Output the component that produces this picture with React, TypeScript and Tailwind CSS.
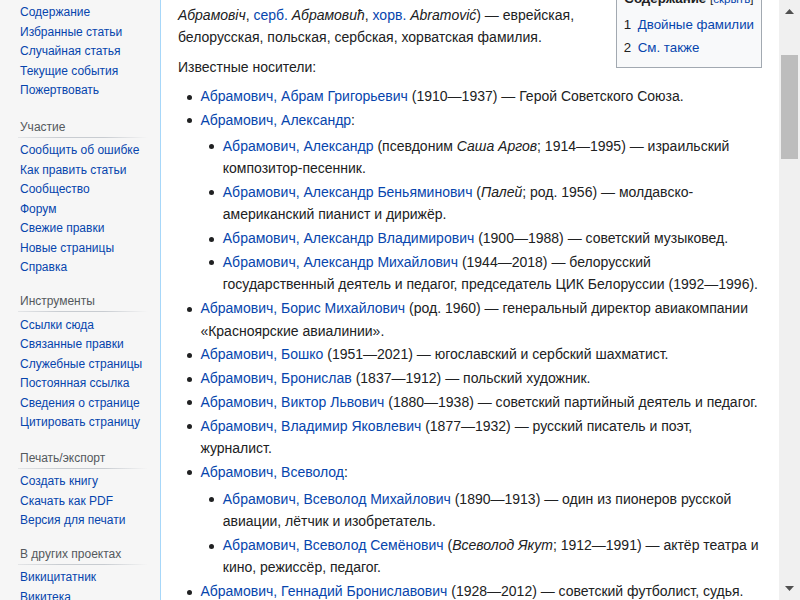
import React from "react";

const font = { fontFamily: '"Liberation Sans", Arial, sans-serif' };

function SideLinks({ links }: { links: string[] }) {
  return (
    <ul>
      {links.map((l) => (
        <li key={l} className="h-[19.5px] pl-[20px] text-[12px] leading-[19.5px] text-[#0645ad] whitespace-nowrap">
          <a>{l}</a>
        </li>
      ))}
    </ul>
  );
}

function Portal({ title, links, mt }: { title: string; links: string[]; mt: string }) {
  return (
    <div className={mt}>
      <div className="h-[19px] pl-[20px] text-[12px] leading-[19px] text-[#54595d]">{title}</div>
      <div className="ml-[18px] mr-[12px] h-px bg-[linear-gradient(to_right,rgba(200,204,209,0.4)_0%,#c8ccd1_33%,#c8ccd1_66%,rgba(200,204,209,0)_100%)]" />
      <div className="mt-[3.5px]">
        <SideLinks links={links} />
      </div>
    </div>
  );
}

function A({ children }: { children: React.ReactNode }) {
  return <a className="text-[#0645ad]">{children}</a>;
}

function Li({ children }: { children: React.ReactNode }) {
  return (
    <li className="relative mb-[1.4px] before:absolute before:left-[-13.5px] before:top-[9.5px] before:h-[5px] before:w-[5px] before:rounded-full before:bg-[#202122] before:content-['']">
      {children}
    </li>
  );
}

export default function App() {
  return (
    <div className="flex h-[600px] w-[800px] overflow-hidden bg-white" style={font}>
      <aside className="w-[161px] shrink-0 border-r border-[#a7d7f9] bg-[#f6f6f6] pt-[3px]">
        <SideLinks
          links={["Содержание", "Избранные статьи", "Случайная статья", "Текущие события", "Пожертвовать"]}
        />
        <Portal
          mt="mt-[17px]"
          title="Участие"
          links={[
            "Сообщить об ошибке",
            "Как править статьи",
            "Сообщество",
            "Форум",
            "Свежие правки",
            "Новые страницы",
            "Справка",
          ]}
        />
        <Portal
          mt="mt-[14.5px]"
          title="Инструменты"
          links={[
            "Ссылки сюда",
            "Связанные правки",
            "Служебные страницы",
            "Постоянная ссылка",
            "Сведения о странице",
            "Цитировать страницу",
          ]}
        />
        <Portal
          mt="mt-[16px]"
          title="Печать/экспорт"
          links={["Создать книгу", "Скачать как PDF", "Версия для печати"]}
        />
        <Portal mt="mt-[14px]" title="В других проектах" links={["Викицитатник", "Викитека"]} />
      </aside>

      <main className="min-w-0 flex-1 px-[17px] text-[14px] leading-[22.4px] text-[#202122]">
        <div className="mt-[-18.6px]">
          <div className="float-right ml-[14px] mb-[5px] mt-[-1px] border border-[#a2a9b1] bg-[#f8f9fa] px-[7px] pt-[7px] pb-[8px] text-[13.3px]">
            <div className="text-center whitespace-nowrap">
              <span className="font-bold">Содержание</span>{" "}
              <span className="text-[11.6px]">
                [<a className="text-[#0645ad]">скрыть</a>]
              </span>
            </div>
            <ul className="mt-[3px]">
              <li className="leading-[22.8px]">
                <span className="pr-[6.6px]">1</span>
                <A>Двойные фамилии</A>
              </li>
              <li className="leading-[22.8px]">
                <span className="pr-[6.6px]">2</span>
                <A>См. также</A>
              </li>
            </ul>
          </div>
          <p className="mb-[7px]">
            <b>Абрамо́вич</b> (<A>белор.</A>
            <br />
            <i>Абрамовіч</i>, <A>серб.</A> <i>Абрамовић</i>, <A>хорв.</A> <i>Abramović</i>) — еврейская,
            белорусская, польская, сербская, хорватская фамилия.
          </p>
          <p>Известные носители:</p>
          <ul className="mt-[7px] ml-[22.4px]">
            <Li>
              <A>Абрамович, Абрам Григорьевич</A> (1910—1937) — Герой Советского Союза.
            </Li>
            <Li>
              <A>Абрамович, Александр</A>:
              <ul className="mt-[3.5px] ml-[22.4px]">
                <Li>
                  <A>Абрамович, Александр</A> (псевдоним <i>Саша Аргов</i>; 1914—1995) — израильский
                  композитор-песенник.
                </Li>
                <Li>
                  <A>Абрамович, Александр Беньяминович</A> (<i>Палей</i>; род. 1956) — молдавско-американский
                  пианист и дирижёр.
                </Li>
                <Li>
                  <A>Абрамович, Александр Владимирович</A> (1900—1988) — советский музыковед.
                </Li>
                <Li>
                  <A>Абрамович, Александр Михайлович</A> (1944—2018) — белорусский государственный деятель
                  и педагог, председатель ЦИК Белоруссии (1992—1996).
                </Li>
              </ul>
            </Li>
            <Li>
              <A>Абрамович, Борис Михайлович</A> (род. 1960) — генеральный директор авиакомпании
              «Красноярские авиалинии».
            </Li>
            <Li>
              <A>Абрамович, Бошко</A> (1951—2021) — югославский и сербский шахматист.
            </Li>
            <Li>
              <A>Абрамович, Бронислав</A> (1837—1912) — польский художник.
            </Li>
            <Li>
              <A>Абрамович, Виктор Львович</A> (1880—1938) — советский партийный деятель и педагог.
            </Li>
            <Li>
              <A>Абрамович, Владимир Яковлевич</A> (1877—1932) — русский писатель и поэт, журналист.
            </Li>
            <Li>
              <A>Абрамович, Всеволод</A>:
              <ul className="mt-[4.5px] ml-[22.4px]">
                <Li>
                  <A>Абрамович, Всеволод Михайлович</A> (1890—1913) — один из пионеров русской авиации,
                  лётчик и изобретатель.
                </Li>
                <Li>
                  <A>Абрамович, Всеволод Семёнович</A> (<i>Всеволод Якут</i>; 1912—1991) — актёр театра и
                  кино, режиссёр, педагог.
                </Li>
              </ul>
            </Li>
            <Li>
              <A>Абрамович, Геннадий Брониславович</A> (1928—2012) — советский футболист, судья.
            </Li>
            <Li>
              <A>Абрамович, Григорий Семёнович</A> (1904—1972) — советский учёный.
            </Li>
          </ul>
        </div>
      </main>

      <div className="flex w-[21px] shrink-0 flex-col items-center bg-[#f0f0f0]">
        <div className="flex h-[22px] w-full items-center justify-center">
          <svg width="9" height="5" viewBox="0 0 9 5">
            <polygon points="4.5,0 9,5 0,5" fill="#505050" />
          </svg>
        </div>
        <div className="mt-[33px] h-[104px] w-[17px] bg-[#bdbdbd]" />
        <div className="flex-1" />
        <div className="flex h-[24px] w-full items-center justify-center">
          <svg width="9" height="5" viewBox="0 0 9 5">
            <polygon points="0,0 9,0 4.5,5" fill="#505050" />
          </svg>
        </div>
      </div>
    </div>
  );
}
